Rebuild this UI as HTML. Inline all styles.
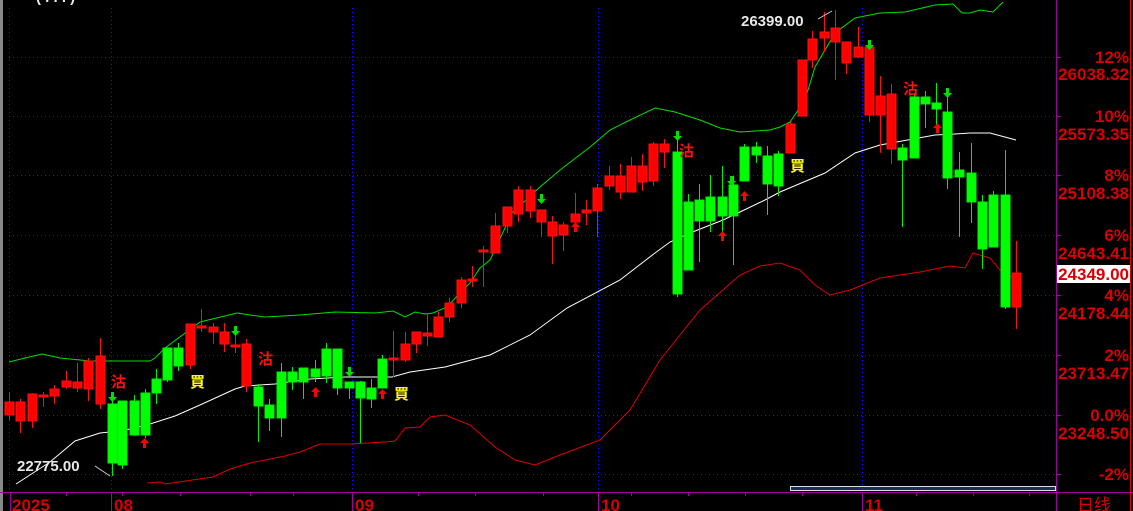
<!DOCTYPE html>
<html><head><meta charset="utf-8"><style>
html,body{margin:0;padding:0;background:#000;width:1133px;height:511px;overflow:hidden}
svg{display:block}
.ax{font-family:"Liberation Sans","Noto Sans CJK SC",sans-serif;font-weight:bold;font-size:17px;fill:#d80000}
.lb{font-family:"Liberation Sans",sans-serif;font-weight:bold;font-size:15px;fill:#e8e8e8}
.cj{font-family:"Noto Sans CJK SC","WenQuanYi Zen Hei",sans-serif;font-weight:bold;font-size:15px}
</style></head><body>
<svg width="1133" height="511" viewBox="0 0 1133 511" xmlns="http://www.w3.org/2000/svg">
<rect width="1133" height="511" fill="#000"/>
<rect x="0" y="0" width="3" height="511" fill="#888"/>
<g stroke="#1a1ae6" stroke-width="1" stroke-dasharray="1,3">
<line x1="9" y1="57.5" x2="1056" y2="57.5"/><line x1="9" y1="116.5" x2="1056" y2="116.5"/>
<line x1="9" y1="175.5" x2="1056" y2="175.5"/><line x1="9" y1="235.5" x2="1056" y2="235.5"/>
<line x1="9" y1="295.5" x2="1056" y2="295.5"/><line x1="9" y1="355.5" x2="1056" y2="355.5"/>
<line x1="9" y1="415.5" x2="1056" y2="415.5"/><line x1="9" y1="474.5" x2="1056" y2="474.5"/>
<line x1="9.5" y1="8" x2="9.5" y2="492"/><line x1="111.5" y1="8" x2="111.5" y2="492"/>
<line x1="352.5" y1="8" x2="352.5" y2="492"/><line x1="598.5" y1="8" x2="598.5" y2="492"/>
<line x1="862.5" y1="8" x2="862.5" y2="492"/>
</g>
<text x="36" y="2" class="lb" font-size="12" fill="#ccc">( . . . )</text>
<polyline fill="none" stroke="#00e000" stroke-width="1" points="9,362 25,358 42,354 60,358 80,360 90,361 150,361 155,358 165,348 200,322 237,313 250,315 265,317 300,315 335,312 375,313 393,311 405,317 415,312 425,314 433,313 447,307 458,295 470,283 480,268 490,260 512,213 540,187 560,170 590,147 610,130 630,120 655,108 675,112 700,120 720,128 740,132 770,130 780,127 790,122 805,100 815,67 835,33 855,18 880,13 905,12 935,5 953,4 962,13 970,13 980,10 993,12 1003,2"/>
<polyline fill="none" stroke="#fff" stroke-width="1" points="16,484 50,462 75,441 100,433 110,432 130,429 150,424 175,416 200,405 235,389 245,386 275,384 310,379 345,377 392,377 410,372 445,367 490,355 530,335 567,308 620,280 655,253 670,242 690,233 723,220 740,212 765,200 780,192 825,173 855,153 880,145 935,135 955,134 970,133 990,133 1016,140"/>
<polyline fill="none" stroke="#e00000" stroke-width="1" points="147,483 160,482 165,484 213,477 230,469 250,463 285,456 300,452 320,444 350,444 385,442 395,441 405,428 420,427 430,417 445,415 470,425 495,447 515,460 535,465 560,455 600,440 630,410 660,360 700,310 740,275 760,266 780,263 800,270 815,285 830,295 850,290 880,278 920,272 950,266 965,268 973,253 990,258 1000,270 1016,280"/>
<g shape-rendering="crispEdges">
<g stroke="#ff1010" fill="#ff0000">
<line x1="9.5" y1="392" x2="9.5" y2="420"/><rect x="5" y="402" width="9" height="13"/>
<line x1="20.5" y1="399" x2="20.5" y2="433"/><rect x="16" y="402" width="9" height="19"/>
<line x1="32.5" y1="393" x2="32.5" y2="428"/><rect x="28" y="394" width="9" height="27"/>
<line x1="43.5" y1="392" x2="43.5" y2="407"/><rect x="39" y="395" width="9" height="2"/>
<line x1="54.5" y1="385" x2="54.5" y2="404"/><rect x="50" y="389" width="9" height="7"/>
<line x1="66.5" y1="371" x2="66.5" y2="389"/><rect x="62" y="381" width="9" height="6"/>
<line x1="77.5" y1="363" x2="77.5" y2="392"/><rect x="73" y="382" width="9" height="6"/>
<line x1="88.5" y1="358" x2="88.5" y2="401"/><rect x="84" y="361" width="9" height="28"/>
<line x1="100.5" y1="338" x2="100.5" y2="409"/><rect x="96" y="356" width="9" height="48"/>
<line x1="190.5" y1="324" x2="190.5" y2="369"/><rect x="186" y="324" width="9" height="41"/>
<line x1="201.5" y1="309" x2="201.5" y2="332"/><rect x="197" y="326" width="9" height="2"/>
<line x1="213.5" y1="323" x2="213.5" y2="344"/><rect x="209" y="327" width="9" height="5"/>
<line x1="224.5" y1="323" x2="224.5" y2="352"/><rect x="220" y="332" width="9" height="12"/>
<line x1="235.5" y1="333" x2="235.5" y2="353"/><rect x="231" y="345" width="9" height="2"/>
<line x1="246.5" y1="339" x2="246.5" y2="392"/><rect x="242" y="344" width="9" height="42"/>
<line x1="393.5" y1="331" x2="393.5" y2="377"/><rect x="389" y="358" width="9" height="2"/>
<line x1="405.5" y1="332" x2="405.5" y2="362"/><rect x="401" y="344" width="9" height="16"/>
<line x1="416.5" y1="332" x2="416.5" y2="353"/><rect x="412" y="332" width="9" height="12"/>
<line x1="427.5" y1="313" x2="427.5" y2="346"/><rect x="423" y="333" width="9" height="3"/>
<line x1="438.5" y1="312" x2="438.5" y2="337"/><rect x="434" y="317" width="9" height="20"/>
<line x1="449.5" y1="298" x2="449.5" y2="322"/><rect x="445" y="303" width="9" height="14"/>
<line x1="461.5" y1="277" x2="461.5" y2="308"/><rect x="457" y="280" width="9" height="23"/>
<line x1="472.5" y1="266" x2="472.5" y2="287"/><rect x="468" y="279" width="9" height="2"/>
<line x1="483.5" y1="246" x2="483.5" y2="287"/><rect x="479" y="250" width="9" height="2"/>
<line x1="495.5" y1="213" x2="495.5" y2="253"/><rect x="491" y="226" width="9" height="27"/>
<line x1="507.5" y1="207" x2="507.5" y2="233"/><rect x="503" y="207" width="9" height="19"/>
<line x1="518.5" y1="186" x2="518.5" y2="222"/><rect x="514" y="190" width="9" height="24"/>
<line x1="530.5" y1="186" x2="530.5" y2="218"/><rect x="526" y="190" width="9" height="21"/>
<line x1="541.5" y1="210" x2="541.5" y2="237"/><rect x="537" y="210" width="9" height="12"/>
<line x1="552.5" y1="216" x2="552.5" y2="264"/><rect x="548" y="222" width="9" height="14"/>
<line x1="563.5" y1="222" x2="563.5" y2="251"/><rect x="559" y="225" width="9" height="10"/>
<line x1="575.5" y1="193" x2="575.5" y2="232"/><rect x="571" y="214" width="9" height="8"/>
<line x1="586.5" y1="200" x2="586.5" y2="225"/><rect x="582" y="210" width="9" height="3"/>
<line x1="597.5" y1="184" x2="597.5" y2="237"/><rect x="593" y="188" width="9" height="23"/>
<line x1="609.5" y1="166" x2="609.5" y2="190"/><rect x="605" y="176" width="9" height="10"/>
<line x1="620.5" y1="164" x2="620.5" y2="199"/><rect x="616" y="176" width="9" height="16"/>
<line x1="631.5" y1="157" x2="631.5" y2="192"/><rect x="627" y="166" width="9" height="26"/>
<line x1="642.5" y1="154" x2="642.5" y2="191"/><rect x="638" y="166" width="9" height="16"/>
<line x1="653.5" y1="142" x2="653.5" y2="186"/><rect x="649" y="144" width="9" height="37"/>
<line x1="664.5" y1="139" x2="664.5" y2="168"/><rect x="660" y="144" width="9" height="8"/>
<line x1="790.5" y1="122" x2="790.5" y2="153"/><rect x="786" y="124" width="9" height="29"/>
<line x1="802.5" y1="60" x2="802.5" y2="116"/><rect x="798" y="60" width="9" height="56"/>
<line x1="812.5" y1="31" x2="812.5" y2="68"/><rect x="808" y="39" width="9" height="21"/>
<line x1="824.5" y1="12" x2="824.5" y2="52"/><rect x="820" y="32" width="9" height="6"/>
<line x1="835.5" y1="10" x2="835.5" y2="80"/><rect x="831" y="28" width="9" height="14"/>
<line x1="846.5" y1="42" x2="846.5" y2="74"/><rect x="842" y="42" width="9" height="21"/>
<line x1="858.5" y1="27" x2="858.5" y2="58"/><rect x="854" y="47" width="9" height="10"/>
<line x1="869.5" y1="47" x2="869.5" y2="122"/><rect x="865" y="47" width="9" height="68"/>
<line x1="880.5" y1="76" x2="880.5" y2="153"/><rect x="876" y="96" width="9" height="19"/>
<line x1="891.5" y1="84" x2="891.5" y2="164"/><rect x="887" y="94" width="9" height="55"/>
<line x1="1016.5" y1="241" x2="1016.5" y2="329"/><rect x="1012" y="273" width="9" height="34"/>
</g>
<g stroke="#00f000" fill="#00ff00">
<line x1="112.5" y1="398" x2="112.5" y2="476"/><rect x="108" y="404" width="9" height="59"/>
<line x1="122.5" y1="401" x2="122.5" y2="469"/><rect x="118" y="401" width="9" height="64"/>
<line x1="134.5" y1="395" x2="134.5" y2="436"/><rect x="130" y="401" width="9" height="34"/>
<line x1="145.5" y1="389" x2="145.5" y2="438"/><rect x="141" y="393" width="9" height="42"/>
<line x1="156.5" y1="369" x2="156.5" y2="404"/><rect x="152" y="379" width="9" height="14"/>
<line x1="167.5" y1="348" x2="167.5" y2="382"/><rect x="163" y="348" width="9" height="32"/>
<line x1="178.5" y1="343" x2="178.5" y2="371"/><rect x="174" y="348" width="9" height="18"/>
<line x1="258.5" y1="384" x2="258.5" y2="442"/><rect x="254" y="387" width="9" height="19"/>
<line x1="269.5" y1="399" x2="269.5" y2="431"/><rect x="265" y="405" width="9" height="13"/>
<line x1="281.5" y1="363" x2="281.5" y2="437"/><rect x="277" y="372" width="9" height="46"/>
<line x1="292.5" y1="367" x2="292.5" y2="390"/><rect x="288" y="372" width="9" height="10"/>
<line x1="303.5" y1="368" x2="303.5" y2="399"/><rect x="299" y="368" width="9" height="14"/>
<line x1="315.5" y1="360" x2="315.5" y2="382"/><rect x="311" y="369" width="9" height="8"/>
<line x1="326.5" y1="343" x2="326.5" y2="383"/><rect x="322" y="349" width="9" height="27"/>
<line x1="337.5" y1="349" x2="337.5" y2="395"/><rect x="333" y="349" width="9" height="39"/>
<line x1="349.5" y1="382" x2="349.5" y2="399"/><rect x="345" y="382" width="9" height="6"/>
<line x1="360.5" y1="381" x2="360.5" y2="443"/><rect x="356" y="382" width="9" height="16"/>
<line x1="371.5" y1="379" x2="371.5" y2="408"/><rect x="367" y="388" width="9" height="11"/>
<line x1="382.5" y1="355" x2="382.5" y2="388"/><rect x="378" y="359" width="9" height="29"/>
<line x1="677.5" y1="133" x2="677.5" y2="297"/><rect x="673" y="152" width="9" height="142"/>
<line x1="688.5" y1="194" x2="688.5" y2="270"/><rect x="684" y="202" width="9" height="68"/>
<line x1="699.5" y1="184" x2="699.5" y2="262"/><rect x="695" y="200" width="9" height="21"/>
<line x1="710.5" y1="175" x2="710.5" y2="232"/><rect x="706" y="197" width="9" height="24"/>
<line x1="722.5" y1="166" x2="722.5" y2="240"/><rect x="718" y="197" width="9" height="19"/>
<line x1="733.5" y1="176" x2="733.5" y2="265"/><rect x="729" y="185" width="9" height="31"/>
<line x1="744.5" y1="144" x2="744.5" y2="181"/><rect x="740" y="147" width="9" height="34"/>
<line x1="756.5" y1="142" x2="756.5" y2="163"/><rect x="752" y="147" width="9" height="8"/>
<line x1="767.5" y1="146" x2="767.5" y2="215"/><rect x="763" y="156" width="9" height="28"/>
<line x1="778.5" y1="151" x2="778.5" y2="196"/><rect x="774" y="154" width="9" height="32"/>
<line x1="902.5" y1="144" x2="902.5" y2="227"/><rect x="898" y="148" width="9" height="12"/>
<line x1="914.5" y1="93" x2="914.5" y2="158"/><rect x="910" y="97" width="9" height="61"/>
<line x1="925.5" y1="91" x2="925.5" y2="128"/><rect x="921" y="97" width="9" height="7"/>
<line x1="936.5" y1="83" x2="936.5" y2="128"/><rect x="932" y="103" width="9" height="6"/>
<line x1="947.5" y1="97" x2="947.5" y2="189"/><rect x="943" y="112" width="9" height="66"/>
<line x1="959.5" y1="152" x2="959.5" y2="237"/><rect x="955" y="170" width="9" height="7"/>
<line x1="971.5" y1="143" x2="971.5" y2="223"/><rect x="967" y="173" width="9" height="29"/>
<line x1="982.5" y1="195" x2="982.5" y2="269"/><rect x="978" y="202" width="9" height="47"/>
<line x1="993.5" y1="191" x2="993.5" y2="247"/><rect x="989" y="195" width="9" height="52"/>
<line x1="1005.5" y1="150" x2="1005.5" y2="309"/><rect x="1001" y="195" width="9" height="112"/>
</g>
</g>
<g fill="#00e000">
<path d="M111,392h3v5h3l-4.5,5l-4.5-5h3z"/>
<path d="M234,326h3v5h3l-4.5,5l-4.5-5h3z"/>
<path d="M348,367h3v5h3l-4.5,5l-4.5-5h3z"/>
<path d="M540,194h3v5h3l-4.5,5l-4.5-5h3z"/>
<path d="M676,131h3v5h3l-4.5,5l-4.5-5h3z"/>
<path d="M730,176h3v5h3l-4.5,5l-4.5-5h3z"/>
<path d="M868,40h3v5h3l-4.5,5l-4.5-5h3z"/>
<path d="M946,88h3v5h3l-4.5,5l-4.5-5h3z"/>
</g>
<g fill="#ff0000">
<path d="M144.5,438l4.5,5h-3v5h-3v-5h-3z"/>
<path d="M315.5,387l4.5,5h-3v5h-3v-5h-3z"/>
<path d="M382.5,389l4.5,5h-3v5h-3v-5h-3z"/>
<path d="M575.5,222l4.5,5h-3v5h-3v-5h-3z"/>
<path d="M722.5,231l4.5,5h-3v5h-3v-5h-3z"/>
<path d="M744.5,191l4.5,5h-3v5h-3v-5h-3z"/>
<path d="M937.5,123l4.5,5h-3v5h-3v-5h-3z"/>
</g>
<text x="111" y="387" class="cj" fill="#ff1010">沽</text>
<text x="258" y="364" class="cj" fill="#ff1010">沽</text>
<text x="679" y="156" class="cj" fill="#ff1010">沽</text>
<text x="903" y="94" class="cj" fill="#ff1010">沽</text>
<text x="190" y="387" class="cj" fill="#ffff00">買</text>
<text x="394" y="399" class="cj" fill="#ffff00">買</text>
<text x="790" y="171" class="cj" fill="#ffff00">買</text>
<text x="741" y="26" class="lb">26399.00</text>
<line x1="818" y1="19" x2="832" y2="11" stroke="#ccc"/>
<text x="17" y="471" class="lb">22775.00</text>
<line x1="95" y1="466" x2="110" y2="476" stroke="#ccc"/>
<rect x="790.5" y="486.5" width="265" height="4" fill="#1c2c5c" stroke="#ddd"/>
<line x1="0" y1="492.5" x2="1133" y2="492.5" stroke="#a000a0"/>
<line x1="1056.5" y1="0" x2="1056.5" y2="511" stroke="#a000a0"/>
<line x1="1130.5" y1="0" x2="1130.5" y2="511" stroke="#e00000"/>
<g stroke="#a000a0">
<line x1="10.5" y1="492" x2="10.5" y2="511"/><line x1="111.5" y1="492" x2="111.5" y2="511"/>
<line x1="352.5" y1="492" x2="352.5" y2="511"/><line x1="598.5" y1="492" x2="598.5" y2="511"/>
<line x1="862.5" y1="492" x2="862.5" y2="511"/>
<line x1="66.5" y1="492" x2="66.5" y2="496"/><line x1="122.5" y1="492" x2="122.5" y2="496"/>
<line x1="180.5" y1="492" x2="180.5" y2="496"/><line x1="250.5" y1="492" x2="250.5" y2="496"/>
<line x1="293.5" y1="492" x2="293.5" y2="496"/><line x1="418.5" y1="492" x2="418.5" y2="496"/>
<line x1="475.5" y1="492" x2="475.5" y2="496"/><line x1="543.5" y1="492" x2="543.5" y2="496"/>
<line x1="631.5" y1="492" x2="631.5" y2="496"/><line x1="688.5" y1="492" x2="688.5" y2="496"/>
<line x1="745.5" y1="492" x2="745.5" y2="496"/><line x1="802.5" y1="492" x2="802.5" y2="496"/>
<line x1="916.5" y1="492" x2="916.5" y2="496"/><line x1="973.5" y1="492" x2="973.5" y2="496"/>
<line x1="1029.5" y1="492" x2="1029.5" y2="496"/>
<line x1="1056" y1="57.5" x2="1061" y2="57.5"/><line x1="1056" y1="116.5" x2="1061" y2="116.5"/>
<line x1="1056" y1="175.5" x2="1061" y2="175.5"/><line x1="1056" y1="235.5" x2="1061" y2="235.5"/>
<line x1="1056" y1="295.5" x2="1061" y2="295.5"/><line x1="1056" y1="355.5" x2="1061" y2="355.5"/>
<line x1="1056" y1="415.5" x2="1061" y2="415.5"/><line x1="1056" y1="474.5" x2="1061" y2="474.5"/>
</g>
<g class="ax">
<text x="12" y="511">2025</text>
<text x="114" y="511">08</text>
<text x="355" y="511">09</text>
<text x="601" y="511">10</text>
<text x="865" y="511">11</text>
<text x="1077" y="511" font-weight="normal">日线</text>
</g>
<g class="ax" text-anchor="end">
<text x="1129" y="63">12%</text><text x="1129" y="80">26038.32</text>
<text x="1129" y="122">10%</text><text x="1129" y="140">25573.35</text>
<text x="1129" y="181">8%</text><text x="1129" y="199">25108.38</text>
<text x="1129" y="241">6%</text><text x="1129" y="259">24643.41</text>
<text x="1129" y="301">4%</text><text x="1129" y="319">24178.44</text>
<text x="1129" y="361">2%</text><text x="1129" y="379">23713.47</text>
<text x="1129" y="421">0.0%</text><text x="1129" y="439">23248.50</text>
<text x="1129" y="480">-2%</text>
</g>
<rect x="1057" y="265" width="73" height="18" fill="#fff"/>
<text x="1129" y="280" class="ax" text-anchor="end" fill="#e00000">24349.00</text>
</svg>
</body></html>
